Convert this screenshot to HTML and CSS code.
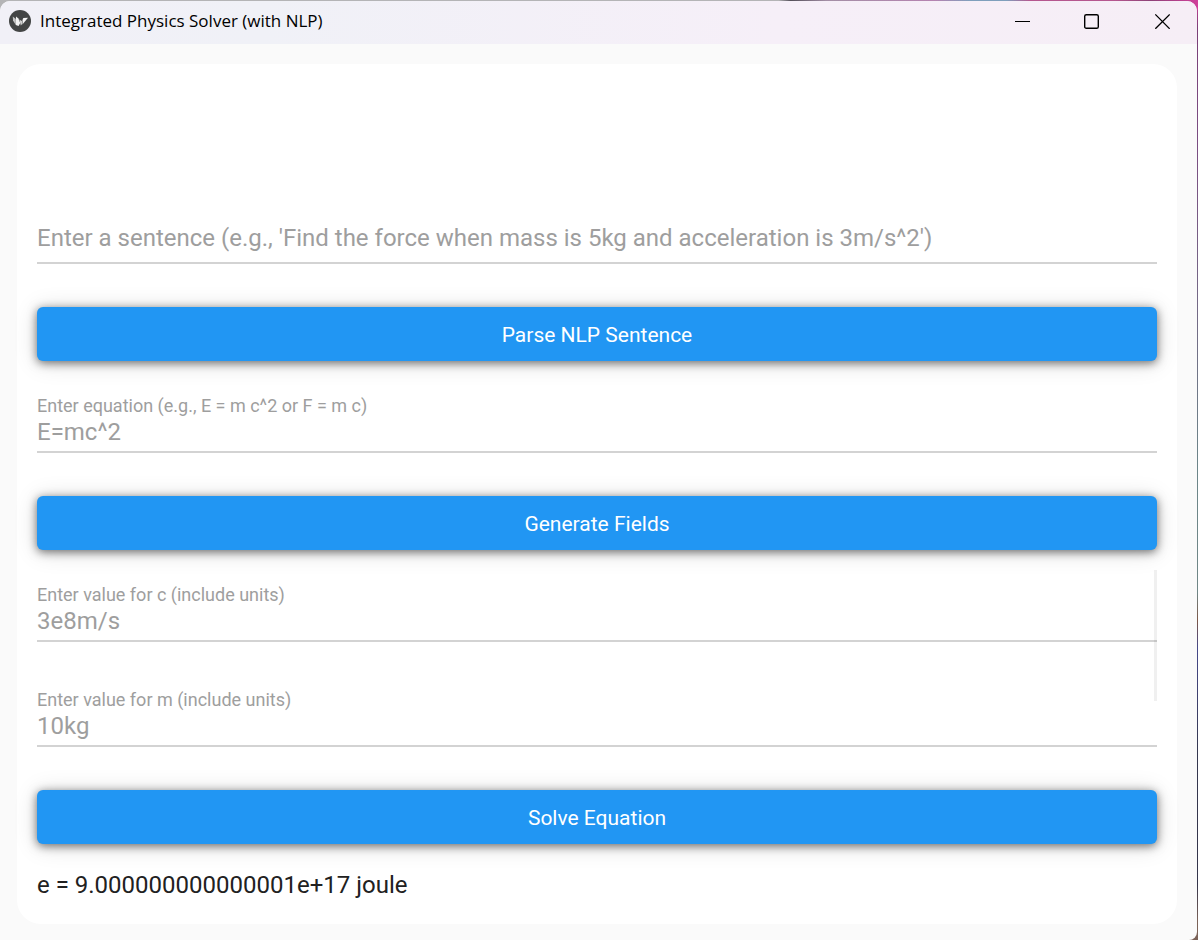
FILE: index.html
```html
<!DOCTYPE html>
<html lang="en">
<head>
<meta charset="utf-8">
<meta name="viewport" content="width=device-width, initial-scale=1">
<title>Integrated Physics Solver (with NLP)</title>
<link rel="stylesheet" href="styles.css">
</head>
<body>
<div class="window">
  <header class="titlebar">
    <svg class="app-icon" viewBox="0 0 22 22" aria-hidden="true">
      <circle cx="11" cy="11" r="11" fill="#434545"/>
      <path d="M3.8 6.6 6.8 9v6L4 10.6z" fill="#c4c4c4"/>
      <path d="M7 6.4 9.4 8.4 11.2 13 9.6 16 6.8 15z" fill="#f2f2f2"/>
      <path d="M10.4 9.6 12.6 11 14 8.6 12.8 14.6 11.8 15.6z" fill="#cfcfcf"/>
      <path d="M14.2 8 19 7.8 13.4 14.6z" fill="#f6f6f6"/>
    </svg>
    <h1 class="title">Integrated Physics Solver (with NLP)</h1>
    <div class="controls">
      <button class="control" type="button" aria-label="Minimize">
        <svg viewBox="0 0 16 16" aria-hidden="true"><path d="M1 8.5h15" fill="none" stroke="#000"/></svg>
      </button>
      <button class="control" type="button" aria-label="Maximize">
        <svg viewBox="0 0 16 16" aria-hidden="true"><rect x=".7" y="1.7" width="13.6" height="13.6" rx="1.6" fill="none" stroke="#000" stroke-width="1.4"/></svg>
      </button>
      <button class="control" type="button" aria-label="Close">
        <svg viewBox="0 0 16 16" aria-hidden="true"><path d="M1.3 1.4l14.4 14.4M15.7 1.4L1.3 15.8" fill="none" stroke="#000" stroke-width="1.3"/></svg>
      </button>
    </div>
  </header>
  <main class="card">
    <div class="field">
      <input class="field-input" type="text" aria-label="Sentence" placeholder="Enter a sentence (e.g., 'Find the force when mass is 5kg and acceleration is 3m/s^2')">
    </div>
    <button class="action" type="button">Parse NLP Sentence</button>
    <div class="field">
      <label class="field-label" for="equation">Enter equation (e.g., E = m c^2 or F = m c)</label>
      <input class="field-input" id="equation" type="text" value="E=mc^2">
    </div>
    <button class="action" type="button">Generate Fields</button>
    <div class="values">
      <div class="field">
        <label class="field-label" for="value-c">Enter value for c (include units)</label>
        <input class="field-input" id="value-c" type="text" value="3e8m/s">
      </div>
      <div class="field">
        <label class="field-label" for="value-m">Enter value for m (include units)</label>
        <input class="field-input" id="value-m" type="text" value="10kg">
      </div>
      <div class="scrollbar"></div>
    </div>
    <button class="action" type="button">Solve Equation</button>
    <output class="result">e = 9.000000000000001e+17 joule</output>
  </main>
</div>
</body>
</html>
```

FILE: styles.css
```css
* {
  box-sizing: border-box;
}

body {
  margin: 0;
  min-height: 100vh;
  display: flex;
  padding: 1px 1px 0 0;
  font-family: Roboto, sans-serif;
  background:
    linear-gradient(to right, #b4b4b6 0, #b4b4b6 65%, #55505a 66%, #a48fa6 69%, #b583b0 78%, #7f9fbc 81%, #7f9fbc 84%, #b5578f 86%, #b5578f 93%, #8d4277 96%, #d0409a 100%) top / 100% 10px no-repeat,
    linear-gradient(to bottom, #d0409a 0, #7b3f77 3%, #7b4c82 15%, #6c8589 50%, #6f8686 63%, #7b5647 66%, #45488a 69%, #35374f 80%, #33344a 94%, #7b6258 98%) #55505a;
}

.window {
  flex: 1;
  display: flex;
  flex-direction: column;
  overflow: hidden;
  border-radius: 10px 10px 8px 0;
  background: #fafafa;
}

.titlebar {
  display: flex;
  align-items: center;
  height: 43px;
  padding: 0 0 3px 9px;
  background: linear-gradient(to right, #f1f0f7 0, #f0f1f7 22%, #f6eff8 65%, #f6eef6 100%);
}

.app-icon {
  width: 22px;
  height: 22px;
}

.title {
  flex: 1;
  margin: 0 0 0 9px;
  font: 400 17px/24px "Segoe UI", "Open Sans", sans-serif;
  color: #000;
}

.controls {
  display: flex;
}

.control {
  display: flex;
  align-items: center;
  justify-content: center;
  width: 70px;
  height: 40px;
  padding: 0;
  border: 0;
  background: none;
}

.control svg {
  width: 16px;
  height: 16px;
}

.card {
  flex: 1;
  display: flex;
  flex-direction: column;
  justify-content: flex-end;
  gap: 20px;
  margin: 20px 20px 16px 17px;
  padding: 20px;
  border-radius: 24px;
  background: #fff;
}

.field {
  display: flex;
  flex-direction: column;
  justify-content: flex-end;
  height: 95px;
  padding-bottom: 23px;
}

.field-label {
  font-size: 18px;
  line-height: 20px;
  color: #9e9e9e;
}

.field-input {
  width: 100%;
  height: 37px;
  padding: 0 0 3px;
  border: 0;
  border-bottom: 2px solid #d3d3d3;
  outline: 0;
  background: none;
  font: 24px/32px Roboto, sans-serif;
  color: #9e9e9e;
}

.field-input::placeholder {
  color: #9e9e9e;
  opacity: 1;
}

.field-input:placeholder-shown {
  padding-bottom: 8px;
  height: 42px;
}

.action {
  height: 54px;
  padding: 2px 6px 0;
  border: 0;
  border-radius: 6px;
  background: #2196f3;
  box-shadow: 0 2px 10px rgba(0, 0, 0, .55), 0 2px 24px rgba(0, 0, 0, .14);
  font: 21px/24px Roboto, sans-serif;
  color: #fff;
}

.values {
  position: relative;
  display: flex;
  flex-direction: column;
  gap: 10px;
}

.scrollbar {
  position: absolute;
  top: 0;
  right: 0;
  width: 3px;
  height: 131px;
  background: rgba(0, 0, 0, .06);
}

.result {
  padding-top: 2px;
  font-size: 24px;
  line-height: 38px;
  color: #212121;
}
```
